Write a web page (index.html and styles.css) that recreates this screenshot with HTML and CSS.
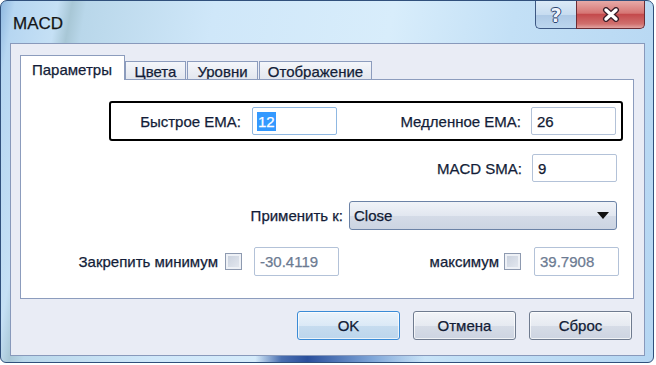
FILE: index.html
```html
<!DOCTYPE html>
<html lang="ru">
<head>
    <meta charset="UTF-8">
    <title>MACD</title>
    <link rel="stylesheet" href="styles.css">
</head>
<body>
    <div class="window">
        <div class="titlebar">
            <div class="title">MACD</div>
            <div class="caption-buttons">
                <div class="cap-btn help-btn"><span>?</span></div>
                <div class="cap-btn close-btn">
                    <svg width="18" height="15" viewBox="0 0 18 15">
                        <path d="M4 3 L14 12 M14 3 L4 12" stroke="#3b1f2a" stroke-width="6" stroke-linecap="round"/>
                        <path d="M4 3 L14 12 M14 3 L4 12" stroke="#ffffff" stroke-width="3.4" stroke-linecap="round"/>
                    </svg>
                </div>
            </div>
        </div>

        <div class="client">
            <div class="tabs">
                <div class="tab tab-active tab-params">Параметры</div>
                <div class="tab tab-colors">Цвета</div>
                <div class="tab tab-levels">Уровни</div>
                <div class="tab tab-view">Отображение</div>
            </div>

            <div class="panel">
                <div class="row row-ema">
                    <div class="ema-box">
                        <div class="label label-fast">Быстрое EMA:</div>
                        <div class="field field-focus"><span class="selected-text">12</span></div>
                        <div class="label label-slow">Медленное EMA:</div>
                        <div class="field">26</div>
                    </div>
                </div>

                <div class="row row-sma">
                    <div class="label label-sma">MACD SMA:</div>
                    <div class="field">9</div>
                </div>

                <div class="row row-apply">
                    <div class="label label-apply">Применить к:</div>
                    <div class="select">
                        <span>Close</span>
                        <svg width="12" height="7" viewBox="0 0 12 7"><path d="M0 0 H12 L6 7 Z" fill="#111"/></svg>
                    </div>
                </div>

                <div class="row row-fix">
                    <div class="label label-min">Закрепить минимум</div>
                    <div class="checkbox cb-min"></div>
                    <div class="field field-disabled field-min">-30.4119</div>
                    <div class="label label-max">максимум</div>
                    <div class="checkbox cb-max"></div>
                    <div class="field field-disabled field-max">39.7908</div>
                </div>
            </div>

            <div class="buttons">
                <div class="btn btn-default">OK</div>
                <div class="btn">Отмена</div>
                <div class="btn">Сброс</div>
            </div>
        </div>
    </div>
</body>
</html>
```

FILE: styles.css
```css
* {
    margin: 0;
    padding: 0;
    box-sizing: border-box;
}

body {
    width: 656px;
    height: 365px;
    overflow: hidden;
    background-color: #ffffff;
    font-family: 'Liberation Sans', Arial, sans-serif;
    font-size: 15px;
    color: #131d38;
    -webkit-text-stroke: 0.25px currentColor;
}

.window {
    width: 654px;
    height: 363px;
    border: 1px solid #30507c;
    border-radius: 7px 7px 6px 6px;
    padding: 0 8px 6px 9px;
    display: flex;
    flex-direction: column;
    background:
        linear-gradient(90deg, rgba(160, 200, 235, 0) 0%, rgba(160, 200, 235, 0) 39%, #4a6fb0 43%, #2a4f9c 47%, #7fa6d8 57%, rgba(160, 200, 235, 0) 65%) bottom / 100% 6px no-repeat,
        linear-gradient(100deg, #8fb8e0 0%, #b6d6f1 2%, #c5e0f5 8%, #a8c7d6 10%, #b9d7ea 12%, #cfe7f9 30%, #d8edfb 55%, #c3e0f6 72%, #b5d6f2 100%);
}

.titlebar {
    height: 42px;
    display: flex;
    justify-content: space-between;
    align-items: flex-start;
}

.title {
    padding: 13px 0 0 3px;
    font-size: 17px;
    color: #141414;
}

.caption-buttons {
    display: flex;
}

.cap-btn {
    height: 28px;
    display: flex;
    align-items: center;
    justify-content: center;
    border: 1px solid #3d5883;
    border-top: none;
}

.help-btn {
    width: 41px;
    border-right: none;
    border-radius: 0 0 0 5px;
    background: linear-gradient(#dbeaf7, #c7dcf0 50%, #aec9e5 51%, #bcd6ee);
}

.help-btn span {
    font-family: 'DejaVu Sans', sans-serif;
    font-weight: bold;
    font-size: 19px;
    color: #eef3fb;
    -webkit-text-stroke: 0;
    text-shadow: 1px 0 0 #2b4470, -1px 0 0 #2b4470, 0 1px 0 #2b4470, 0 -1px 0 #2b4470;
}

.close-btn {
    width: 69px;
    border-color: #6b2c34;
    border-radius: 0 0 5px 0;
    background: linear-gradient(#e6aaa8, #d67674 45%, #c44a4c 50%, #d0706e 85%, #e2a4a2);
}

.client {
    flex: 1;
    border: 1px solid #8899bb;
    background-color: #e9ecf5;
    padding: 11px 10px 0 9px;
    display: flex;
    flex-direction: column;
}

.tabs {
    display: flex;
    align-items: flex-end;
    height: 24px;
}

.tab {
    height: 18px;
    border: 1px solid #8c9cbd;
    border-bottom: none;
    background: linear-gradient(#f4f6fa, #e3e7ef);
    display: flex;
    align-items: center;
    justify-content: center;
    font-size: 15px;
    line-height: 1;
    padding-top: 2px;
}

.tab-active {
    height: 25px;
    margin-bottom: -1px;
    background: #ffffff;
    position: relative;
    z-index: 1;
    padding-top: 3px;
    justify-content: flex-start;
    padding-left: 11px;
}

.tab-params { width: 105px; }
.tab-colors { width: 61px; }
.tab-levels { width: 71px; margin-left: 1px; }
.tab-view { width: 113px; margin-left: 1px; }

.panel {
    width: 614px;
    height: 220px;
    background-color: #ffffff;
    border: 1px solid #8c9cbd;
}

.row {
    display: flex;
    align-items: center;
}

.label {
    text-align: right;
    white-space: nowrap;
}

.field {
    width: 85px;
    height: 28px;
    border: 1px solid #b3c2d8;
    border-radius: 2px;
    padding-left: 5px;
    display: flex;
    align-items: center;
    background-color: #ffffff;
    color: #111a33;
}

.field-focus {
    border-color: #8fb8e2;
    padding-left: 4px;
}

.selected-text {
    background-color: #3399ff;
    color: #ffffff;
    padding: 1px 1px;
}

.field-disabled {
    color: #6c7b92;
}

.row-ema {
    margin-top: 21px;
    padding-left: 88px;
}

.ema-box {
    width: 514px;
    height: 40px;
    border: 2px solid #000000;
    border-radius: 3px;
    display: flex;
    align-items: center;
}

.label-fast { width: 130px; }
.label-fast + .field { margin-left: 11px; }
.label-slow { width: 184px; }
.label-slow + .field { margin-left: 10px; }

.row-sma {
    margin-top: 13px;
    height: 28px;
}

.label-sma { width: 501px; }
.label-sma + .field { margin-left: 10px; }

.row-apply {
    margin-top: 19px;
    height: 29px;
}

.label-apply { width: 322px; }

.select {
    width: 268px;
    height: 29px;
    margin-left: 6px;
    border: 1px solid #6b82a6;
    border-radius: 3px;
    background: linear-gradient(#f0f3f8, #e2e7f0 50%, #d4dbe7 51%, #ccd4e2);
    display: flex;
    align-items: center;
    justify-content: space-between;
    padding: 0 7px 0 4px;
    color: #101a33;
}

.row-fix {
    margin-top: 17px;
    height: 29px;
}

.row-fix .field {
    height: 29px;
}

.label-min { width: 197px; }
.cb-min { margin-left: 7px; }
.field-min { margin-left: 12px; }
.label-max { width: 160px; }
.cb-max { margin-left: 5px; }
.field-max { margin-left: 13px; }

.checkbox {
    width: 17px;
    height: 17px;
    border: 1px solid #8e9ab0;
    background: linear-gradient(135deg, #c7cfdc, #e6eaf1);
    box-shadow: inset 0 0 0 2px #eef1f6;
}

.buttons {
    display: flex;
    justify-content: flex-end;
    gap: 13px;
    margin-top: 12px;
    padding-right: 2px;
}

.btn {
    width: 103px;
    height: 29px;
    border: 1px solid #6f7b8f;
    border-radius: 3px;
    background: linear-gradient(#f2f4f8, #e6eaf1 50%, #d6dce7 51%, #cdd4e1);
    box-shadow: inset 0 0 0 1px rgba(255, 255, 255, 0.7);
    display: flex;
    align-items: center;
    justify-content: center;
    color: #121c36;
}

.btn-default {
    border-color: #3a8bd6;
    background: linear-gradient(#eaf3fb, #dbe9f6 50%, #c6dcef 51%, #bcd5ec);
}
```
